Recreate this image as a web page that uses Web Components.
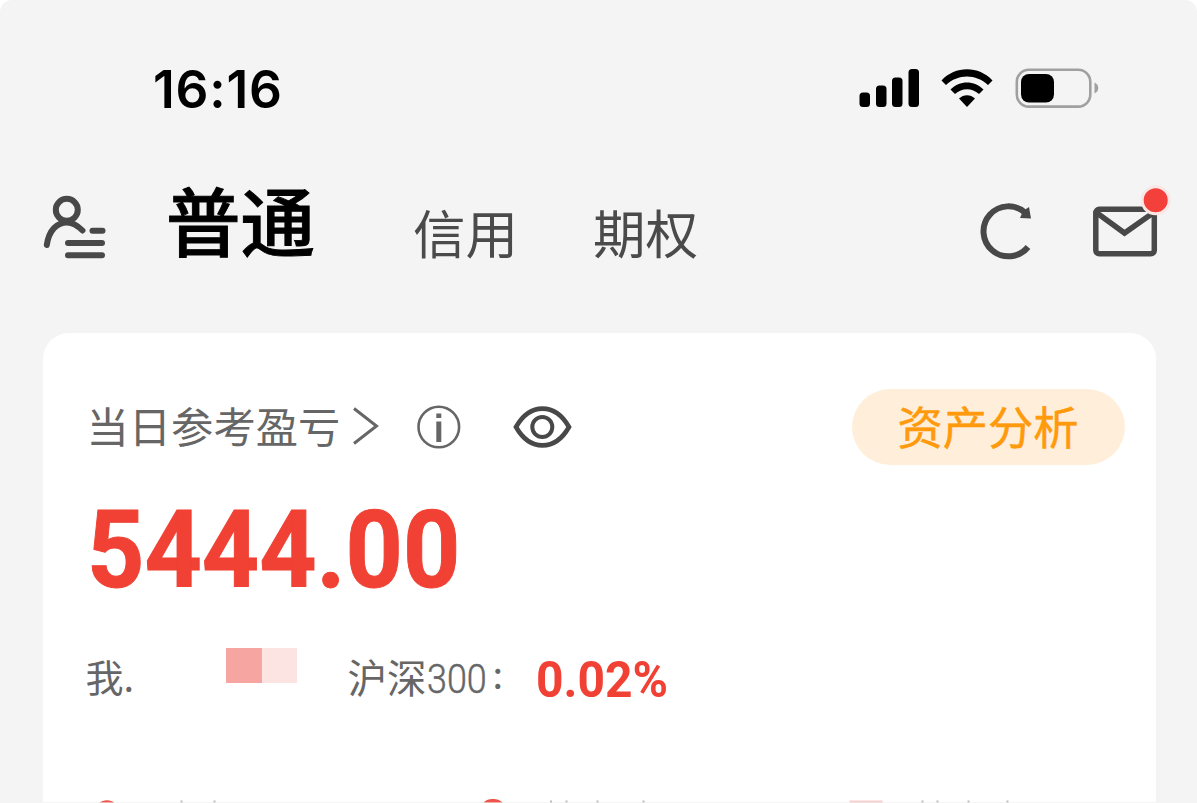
<!DOCTYPE html>
<html lang="zh-CN">
<head>
<meta charset="UTF-8">
<title>普通</title>
<style>
    html, body {
        margin: 0;
        background-color: #fff;
    }
    body {
        width: 1197px;
        height: 803px;
        overflow: hidden;
        font-family: "Noto Sans CJK SC", sans-serif;
    }
</style>
</head>
<body>
<account-page>
    <status-bar slot="header" time="16:16"></status-bar>
    <nav-bar slot="header">
        <nav-tab active>普通</nav-tab>
        <nav-tab>信用</nav-tab>
        <nav-tab>期权</nav-tab>
    </nav-bar>
    <profit-card amount="5444.00" index-name="沪深" index-code="300" change="0.02%">
        <span slot="title">当日参考盈亏</span>
        <span slot="action">资产分析</span>
    </profit-card>
</account-page>

<script>
class AccountPage extends HTMLElement {
    constructor() {
        super();
        this.attachShadow({ mode: 'open' });
    }

    connectedCallback() {
        this.shadowRoot.innerHTML = `
            <style>
                :host {
                    display: flex;
                    flex-direction: column;
                    height: 803px;
                    background-color: #f4f4f4;
                    border-radius: 12px 12px 0 0;
                    overflow: hidden;
                }
                main {
                    flex: 1;
                    display: flex;
                    padding: 0 41.5px 0 42.5px;
                }
            </style>
            <slot name="header"></slot>
            <main><slot></slot></main>
        `;
    }
}

class StatusBar extends HTMLElement {
    constructor() {
        super();
        this.attachShadow({ mode: 'open' });
    }

    connectedCallback() {
        this.shadowRoot.innerHTML = `
            <style>
                :host {
                    display: flex;
                    justify-content: space-between;
                    box-sizing: border-box;
                    height: 150px;
                    padding: 58px 97px 0 153px;
                }
                .time {
                    font: 600 51.5px/62px Inter, sans-serif;
                    letter-spacing: .8px;
                    color: #000;
                    white-space: nowrap;
                }
                svg {
                    display: block;
                    margin-top: 6px;
                }
            </style>
            <div class="time">${this.getAttribute('time')}</div>
            <svg width="242" height="48" viewBox="858 64 242 48">
                <rect x="859.5" y="92.5" width="10.5" height="14.5" rx="3.5"/>
                <rect x="876" y="85.5" width="10.5" height="21.5" rx="3.5"/>
                <rect x="892" y="77.5" width="10.5" height="29.5" rx="3.5"/>
                <rect x="908.5" y="69" width="10.5" height="38" rx="3.5"/>
                <path d="M941.5 80.5C955 65.5 979 65.5 992.5 80.5L988 85C976 73.5 958 73.5 946 85Z"/>
                <path d="M950.5 89.5C959.5 80 974.5 80 983.5 89.500L979 94C972 87.500 962 87.500 955 94Z"/>
                <path d="M959 98.500C963.500 94 970.500 94 975 98.500L967 107Z"/>
                <rect x="1016.800" y="69.800" width="73.500" height="36.800" rx="12" fill="none" stroke="#a0a0a0" stroke-width="2.600"/>
                <rect x="1021" y="74" width="33" height="28.500" rx="8"/>
                <path d="M1094.500 82.500C1099.500 84.500 1099.500 91.500 1094.500 93.500Z" fill="#a0a0a0"/>
            </svg>
        `;
    }
}

class NavTab extends HTMLElement {
    constructor() {
        super();
        this.attachShadow({ mode: 'open' });
    }

    connectedCallback() {
        this.shadowRoot.innerHTML = `
            <style>
                :host {
                    display: block;
                    width: 104px;
                    margin: 41px 76px 0 0;
                    font-size: 52.5px;
                    line-height: 80px;
                    color: #4a4a4a;
                    white-space: nowrap;
                }
                :host([active]) {
                    width: 148px;
                    margin: 17px 98px 0 0;
                    font-size: 74.5px;
                    line-height: 104px;
                    font-weight: 500;
                    color: #000;
                    -webkit-text-stroke: .9px #000;
                    text-indent: -1px;
                }
            </style>
            <slot></slot>
        `;
    }
}

class NavBar extends HTMLElement {
    constructor() {
        super();
        this.attachShadow({ mode: 'open' });
    }

    connectedCallback() {
        this.shadowRoot.innerHTML = `
            <style>
                :host {
                    display: flex;
                    box-sizing: border-box;
                    height: 183px;
                    padding: 0 22px 0 40px;
                }
                .tabs {
                    flex: 1;
                    display: flex;
                }
                .profile {
                    margin: 40px 57px 0 0;
                }
                .actions {
                    margin-top: 30px;
                }
                svg {
                    display: block;
                    fill: none;
                    stroke: #484848;
                    stroke-width: 6;
                }
            </style>
            <svg class="profile" width="70" height="75" viewBox="40 190 70 75" stroke-linecap="round">
                <circle cx="66.8" cy="209.800" r="11"/>
                <path d="M46.800 245C49 230 57 222.500 67 222.500C73 222.500 78 226 82.500 230.500M92.500 230.800H102.500M68 243H102M68 255.300H102"/>
            </svg>
            <div class="tabs"><slot></slot></div>
            <svg class="actions" width="200" height="90" viewBox="975 180 200 90">
                <path d="M1028 247A25 25 0 1 1 1025.500 213"/>
                <path d="M1029 207L1031 218.500L1020 218L1023 211Z" fill="#484848" stroke="none"/>
                <rect x="1095.800" y="209.300" width="58.500" height="44.500" rx="3.500" stroke-width="5.500"/>
                <path d="M1097 213L1124.500 233L1153 213" stroke-width="5.500"/>
                <circle cx="1155.700" cy="200.300" r="13.500" fill="#f4403a" stroke="#f9e6e5" stroke-width="3"/>
            </svg>
        `;
    }
}

class ProfitCard extends HTMLElement {
    constructor() {
        super();
        this.attachShadow({ mode: 'open' });
    }

    connectedCallback() {
        this.shadowRoot.innerHTML = `
            <style>
                :host {
                    flex: 1;
                    display: flex;
                    flex-direction: column;
                    box-sizing: border-box;
                    padding: 56px 31px 0 44px;
                    border-radius: 26px 26px 0 0;
                    background-color: #fff;
                    color: #666;
                    white-space: nowrap;
                }
                .head {
                    display: flex;
                    height: 76px;
                }
                .title {
                    width: 265px;
                    font-size: 42.3px;
                    line-height: 72px;
                }
                .pill {
                    width: 273px;
                    height: 76px;
                    margin-left: auto;
                    border-radius: 38px;
                    background-color: #ffefda;
                    color: #ff9a0c;
                    font-size: 45.3px;
                    line-height: 73px;
                    text-align: center;
                    -webkit-text-stroke: .5px #ff9a0c;
                }
                svg {
                    display: block;
                    fill: none;
                }
                .amount {
                    height: 126px;
                    margin: 23px 0 0;
                    font: 700 107px/126px Roboto, sans-serif;
                    color: #f04134;
                    -webkit-text-stroke: 1px #f04134;
                    transform: scaleX(.935);
                    transform-origin: 0 0;
                }
                .compare {
                    display: flex;
                    height: 60px;
                    margin-top: 32px;
                    font-size: 38px;
                    line-height: 60px;
                }
                .me {
                    width: 55px;
                    margin-left: -1px;
                }
                .mosaic {
                    display: flex;
                    width: 71px;
                    height: 35px;
                    margin: 2px 51px 0 85px;
                    background-color: #fce4e3;
                }
                .mosaic i {
                    width: 36px;
                    background-color: #f7a5a1;
                }
                .name {
                    width: 79px;
                    font-size: 39.5px;
                }
                .code {
                    width: 66px;
                    font: 300 41px/67px Roboto, sans-serif;
                    -webkit-text-stroke: .5px #666;
                    transform: scaleX(.875);
                    transform-origin: 0 0;
                }
                .colon {
                    width: 43px;
                    line-height: 54px;
                }
                .change {
                    font: 700 50px/69px Roboto, sans-serif;
                    color: #f04134;
                    transform: scaleX(.96);
                    transform-origin: 0 0;
                }
                .next {
                    margin: auto -31px 0 -44px;
                }
            </style>
            <div class="head">
                <div class="title"><slot name="title"></slot></div>
                <svg width="225" height="76" viewBox="352 389 225 76">
                    <path d="M354 408.500L376.500 426L354 443.500" stroke="#666" stroke-width="3"/>
                    <circle cx="438.800" cy="427" r="20.300" stroke="#666" stroke-width="2.600"/>
                    <path d="M438.800 413.500V418M438.800 421.500V442" stroke="#666" stroke-width="5"/>
                    <path d="M516 427C530 402.500 555 402.500 569 427C555 451.500 530 451.500 516 427Z" stroke="#484848" stroke-width="4.600"/>
                    <circle cx="542.300" cy="427" r="10" stroke="#484848" stroke-width="4"/>
                </svg>
                <div class="pill"><slot name="action"></slot></div>
            </div>
            <div class="amount">${this.getAttribute('amount')}</div>
            <div class="compare">
                <div class="me">我.</div>
                <div class="mosaic"><i></i></div>
                <div class="name">${this.getAttribute('index-name')}</div>
                <div class="code">${this.getAttribute('index-code')}</div>
                <div class="colon">:</div>
                <div class="change">${this.getAttribute('change')}</div>
            </div>
            <svg class="next" width="1113" height="5" viewBox="42.500 798 1113 5">
                <path d="M99 803C102 799.300 111 799.300 114 803ZM483 803C486 797.800 499 797.800 502 803Z" fill="#f0554b"/>
                <path d="M849 800.500H882V803H849Z" fill="#f8d0cf"/>
                <path d="M181 800.500V803M214 800.500V803M550.500 800.500V803M566 800.500V803M597 800.500V803M643 800.500V803M922 800.500V803M937 800.500V803M968 800.500V803M1007 800.500V803" stroke="#bbb" stroke-width="2"/>
                <path d="M42.500 802.500H1155.500" stroke="#eee" stroke-opacity=".6"/>
            </svg>
        `;
    }
}

customElements.define('account-page', AccountPage);
customElements.define('status-bar', StatusBar);
customElements.define('nav-tab', NavTab);
customElements.define('nav-bar', NavBar);
customElements.define('profit-card', ProfitCard);
</script>
</body>
</html>
